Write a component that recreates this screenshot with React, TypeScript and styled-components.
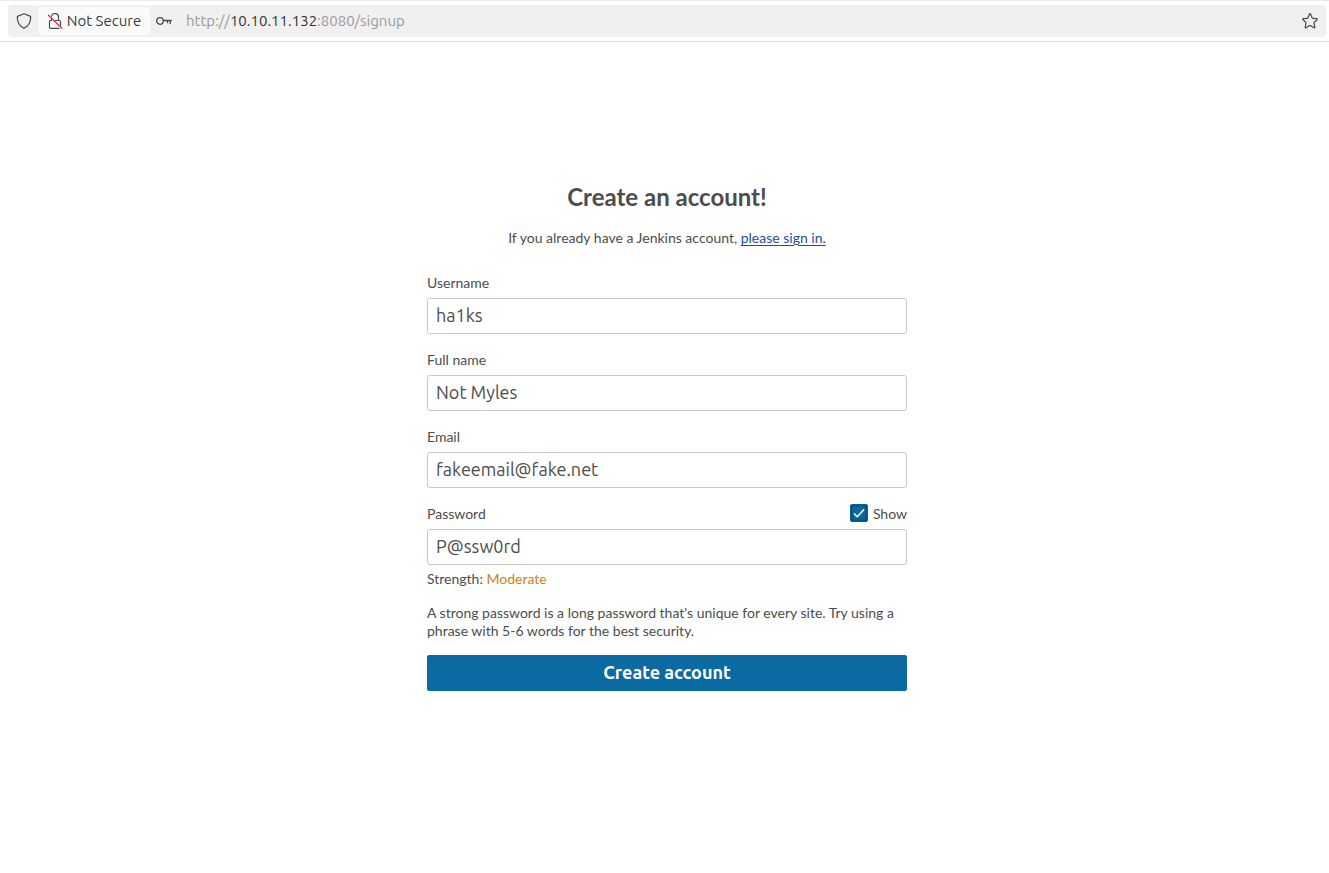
import React, { useState } from "react";
import styled, { createGlobalStyle } from "styled-components";

const uiFont = `Ubuntu, "Noto Sans", sans-serif`;

const GlobalStyle = createGlobalStyle`
  *, *::before, *::after { box-sizing: border-box; }
  body {
    margin: 0;
    background: #fff;
    color: #4d4d4d;
    font: 14px/20px Lato, sans-serif;
  }
`;

const Toolbar = styled.header`
  display: flex;
  padding: 4px 3px 4px 8px;
  border-top: 1px solid #ebebeb;
  border-bottom: 1px solid #e0e0e0;
`;

const AddressBar = styled.div`
  flex: 1;
  display: flex;
  align-items: center;
  height: 32px;
  border-radius: 4px;
  background: #f0f0f0;
  font: 15px/20px ${uiFont};
`;

const BarButton = styled.button<{ $width: number }>`
  display: flex;
  align-items: center;
  justify-content: center;
  width: ${(p) => p.$width}px;
  height: 28px;
  padding: 0;
  border: 0;
  background: none;
  color: #4a4a4a;
`;

const SecurityButton = styled(BarButton)`
  gap: 4px;
  margin: 0 0 0 -2px;
  border-radius: 4px;
  background: #fafafa;
  color: #3d3d3d;
  font: 15px/20px ${uiFont};
  white-space: nowrap;
`;

const Address = styled.div`
  flex: 1;
  padding-left: 8px;
  color: #9a9a9a;
`;

const Host = styled.span`
  color: #333;
`;

const Page = styled.div`
  padding: 140px 0 40px 5px;
`;

const Main = styled.main`
  max-width: 480px;
  margin: 0 auto;
`;

const Title = styled.h1`
  margin: 0 0 16px;
  font-size: 24px;
  line-height: 30px;
  font-weight: 700;
  text-align: center;
`;

const Intro = styled.p`
  margin: 0 0 25px;
  text-align: center;
`;

const SignInLink = styled.a`
  color: #204f9a;
  text-decoration: underline;
  text-underline-offset: 2px;
`;

const Form = styled.form`
  display: flex;
  flex-direction: column;
  gap: 16px;
`;

const Field = styled.div`
  display: flex;
  flex-direction: column;
  gap: 5px;
`;

const LabelRow = styled.div`
  display: flex;
  align-items: flex-start;
  justify-content: space-between;
`;

const TextInput = styled.input`
  width: 100%;
  height: 36px;
  padding: 0 8px 2px;
  border: 1px solid #c8c8c8;
  border-radius: 3px;
  background: #fff;
  color: #4d4d4d;
  font: 18px/24px ${uiFont};
  outline: none;
`;

const ShowLabel = styled.label`
  display: flex;
  align-items: flex-start;
  gap: 5px;
`;

const CheckWrap = styled.span`
  position: relative;
  display: flex;
`;

const Checkbox = styled.input`
  appearance: none;
  width: 18px;
  height: 18px;
  margin: 0;
  border: 1px solid #004f80;
  border-radius: 2px;
  background: #fff;

  &:checked {
    border-color: #075f93;
    background: #0b6aa2;
    box-shadow: inset 0 0 3px 1px #004970;
  }
`;

const CheckMark = styled.svg`
  position: absolute;
  inset: 0;
  pointer-events: none;
`;

const Strength = styled.div`
  line-height: 18px;
`;

const Rating = styled.span`
  color: #cb8315;
`;

const Actions = styled.div`
  display: flex;
  flex-direction: column;
  gap: 15px;
`;

const Hint = styled.p`
  margin: 0;
  line-height: 18px;
`;

const SubmitButton = styled.button`
  height: 36px;
  padding: 0 0 2px;
  border: 0;
  border-radius: 2px;
  background: #0b6aa2;
  color: #fff;
  font: 600 18px/24px ${uiFont};
`;

const ShieldIcon = () => (
  <svg width="16" height="16" viewBox="0 0 16 16" fill="none" stroke="currentColor" strokeWidth="1.2" strokeLinejoin="round" aria-hidden="true">
    <path d="M8 .7 14 3.100q.7.3.7 1c0 5-2.200 9.100-6.700 11.200C3.500 13.200 1.300 9.100 1.300 4.100q0-.7.7-1Z" />
  </svg>
);

const InsecureIcon = () => (
  <svg width="16" height="16" viewBox="0 0 16 16" fill="none" aria-hidden="true">
    <path d="M4.600 3.200A3.500 3.500 0 0 1 11.500 4.200V7.500M8.500 7.500H12.300Q13.500 7.500 13.500 8.700V12.500M4.500 5.500V7.500H3.700Q2.500 7.500 2.500 8.700V14.200Q2.500 15.400 3.700 15.400H12" stroke="#4a4a4a" strokeWidth="1.2" strokeLinecap="round" />
    <path d="m1.500 2.200 13.300 13.200" stroke="#e4204c" strokeWidth="1.3" strokeLinecap="round" />
  </svg>
);

const KeyIcon = () => (
  <svg width="16" height="16" viewBox="0 0 16 16" fill="none" stroke="currentColor" strokeWidth="1.3" strokeLinecap="round" strokeLinejoin="round" aria-hidden="true">
    <circle cx="4" cy="8" r="3.300" />
    <path d="M7.300 7.500H15.300M11.500 7.500V9.700M14.200 7.500V10.700" />
  </svg>
);

const StarIcon = () => (
  <svg width="16" height="16" viewBox="0 0 16 16" fill="none" stroke="currentColor" strokeWidth="1.2" strokeLinejoin="round" aria-hidden="true">
    <path d="M7.400 1.200Q8 .1 8.600 1.200L10.200 4.900Q10.400 5.300 10.800 5.300L14.700 5.700Q15.700 5.900 15 6.700L12.200 9.400Q11.900 9.700 12 10.100L12.800 14.100Q12.900 15.200 11.900 14.700L8.400 12.600Q8 12.400 7.600 12.600L4.100 14.700Q3.100 15.200 3.200 14.100L4 10.100Q4.100 9.700 3.800 9.400L1 6.700Q.3 5.900 1.300 5.700L5.200 5.300Q5.600 5.300 5.800 4.900Z" />
  </svg>
);

interface TextFieldProps {
  id: string;
  label: string;
  type?: string;
  initial: string;
}

const TextField = ({ id, label, type = "text", initial }: TextFieldProps) => (
  <Field>
    <label htmlFor={id}>{label}</label>
    <TextInput id={id} name={id} type={type} defaultValue={initial} spellCheck={false} />
  </Field>
);

export default function App() {
  const [show, setShow] = useState(true);

  return (
    <>
      <GlobalStyle />
      <Toolbar>
        <AddressBar>
          <BarButton $width={32} type="button" aria-label="Tracking protection">
            <ShieldIcon />
          </BarButton>
          <SecurityButton $width={112} type="button">
            <InsecureIcon />
            Not Secure
          </SecurityButton>
          <BarButton $width={28} type="button" aria-label="Saved logins">
            <KeyIcon />
          </BarButton>
          <Address>
            http://<Host>10.10.11.132</Host>:8080/signup
          </Address>
          <BarButton $width={32} type="button" aria-label="Bookmark this page">
            <StarIcon />
          </BarButton>
        </AddressBar>
      </Toolbar>
      <Page>
        <Main>
          <Title>Create an account!</Title>
          <Intro>
            If you already have a Jenkins account, <SignInLink href="#login">please sign in.</SignInLink>
          </Intro>
          <Form onSubmit={(e) => e.preventDefault()}>
            <TextField id="username" label="Username" initial="ha1ks" />
            <TextField id="fullname" label="Full name" initial="Not Myles" />
            <TextField id="email" label="Email" initial="fakeemail@fake.net" />
            <Field>
              <LabelRow>
                <label htmlFor="password">Password</label>
                <ShowLabel>
                  <CheckWrap>
                    <Checkbox type="checkbox" checked={show} onChange={(e) => setShow(e.target.checked)} />
                    {show && (
                      <CheckMark width="18" height="18" viewBox="0 0 18 18" fill="none" aria-hidden="true">
                        <path d="m4 9.500 3.300 3.200L14 5.600" stroke="#fff" strokeWidth="1.500" />
                      </CheckMark>
                    )}
                  </CheckWrap>
                  Show
                </ShowLabel>
              </LabelRow>
              <TextInput id="password" name="password" type={show ? "text" : "password"} defaultValue="P@ssw0rd" spellCheck={false} />
              <Strength>
                Strength: <Rating>Moderate</Rating>
              </Strength>
            </Field>
            <Actions>
              <Hint>
                A strong password is a long password that's unique for every site. Try using a phrase with 5-6 words for
                the best security.
              </Hint>
              <SubmitButton type="submit">Create account</SubmitButton>
            </Actions>
          </Form>
        </Main>
      </Page>
    </>
  );
}
